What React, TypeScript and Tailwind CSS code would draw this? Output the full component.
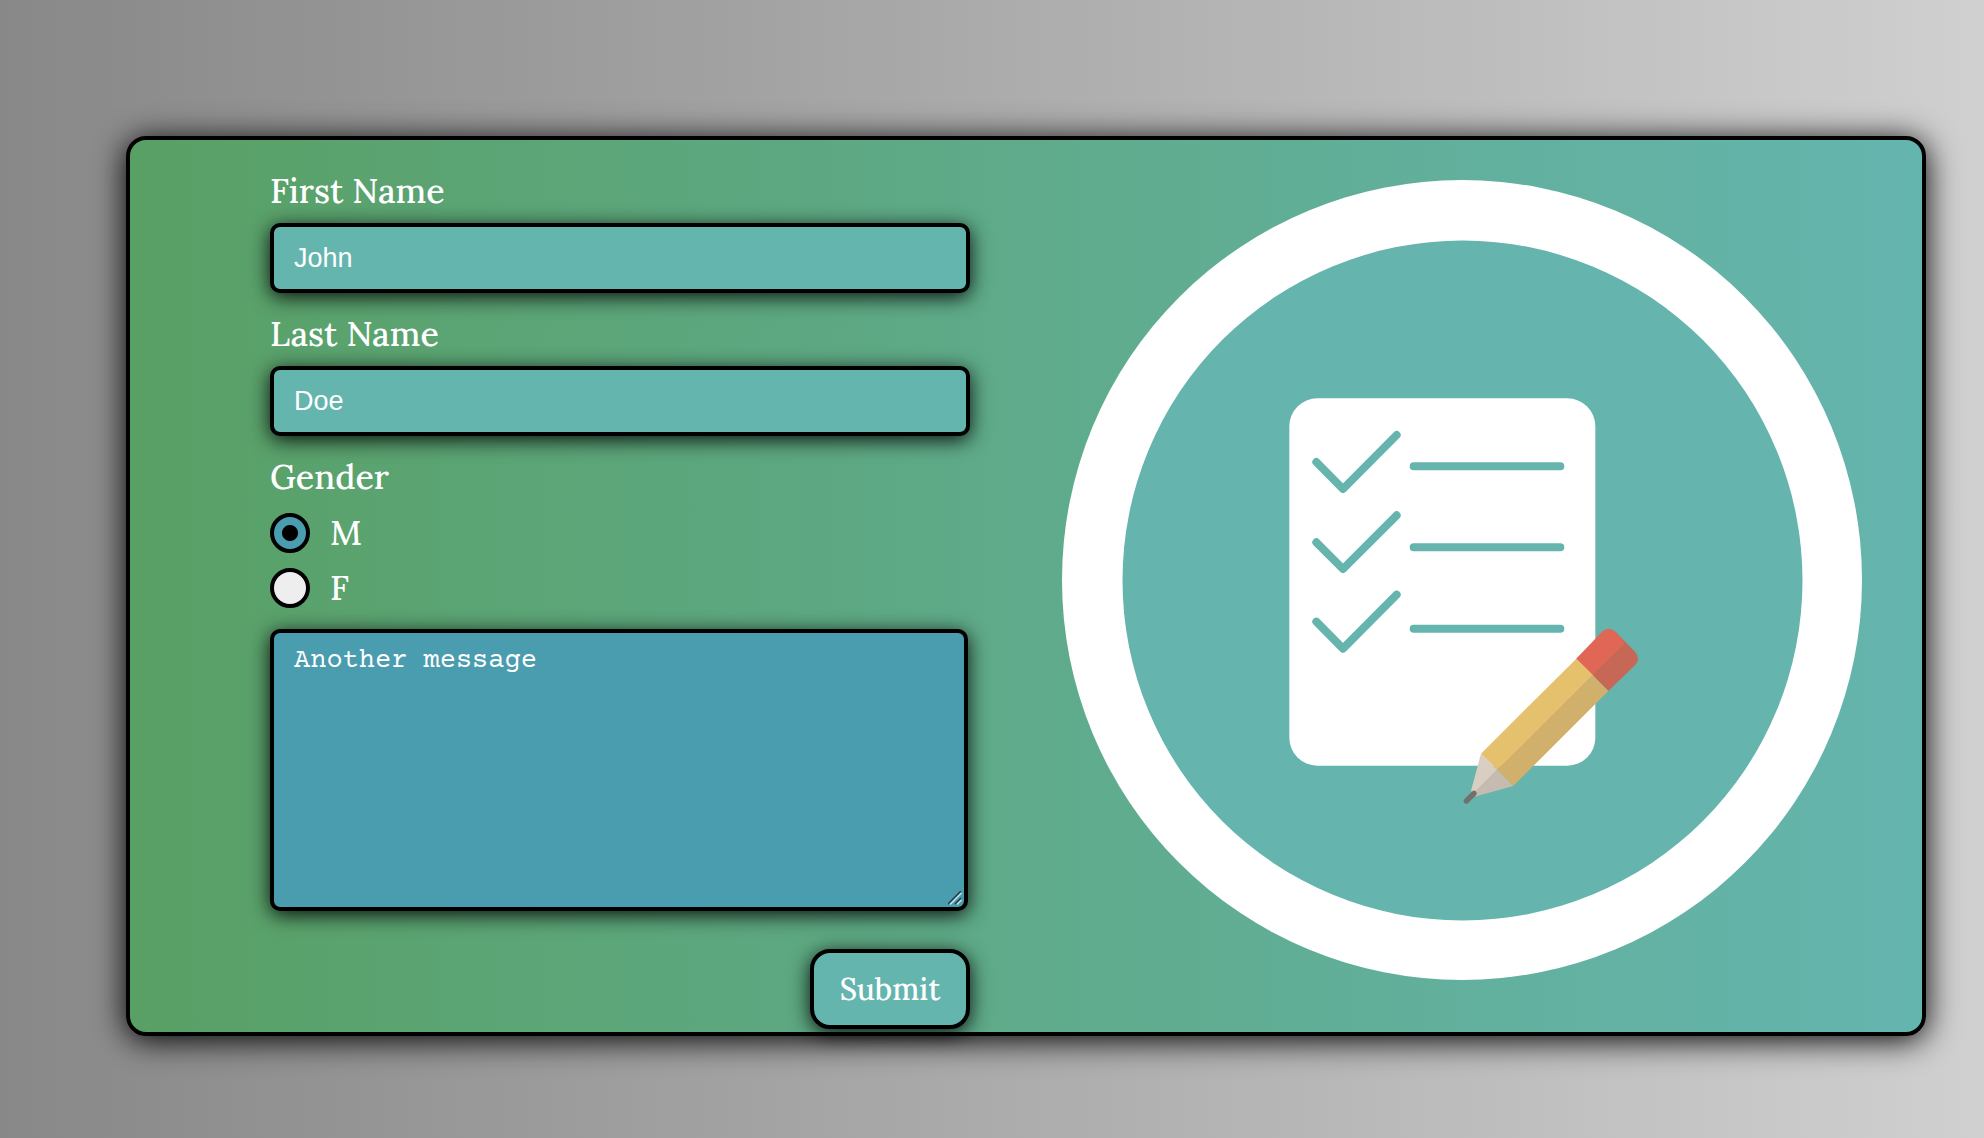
import { useState } from "react";

const serif = "font-['Lora','Liberation_Serif',serif]";

function TextField({ id, label, value }: { id: string; label: string; value: string }) {
  return (
    <div className="mb-[18px]">
      <label htmlFor={id} className="block h-[55px] text-[34px] leading-[46px]">
        {label}
      </label>
      <input
        id={id}
        type="text"
        defaultValue={value}
        className="block h-[70px] w-full rounded-[10px] border-4 border-black bg-[#65b5af] px-5 font-['Liberation_Sans',sans-serif] text-[27px] text-white shadow-[0_4px_20px_rgba(0,0,0,0.9)] outline-none"
      />
    </div>
  );
}

function GenderOption({
  value,
  checked,
  onSelect,
}: {
  value: string;
  checked: boolean;
  onSelect: (value: string) => void;
}) {
  return (
    <label className="flex h-[55px] items-center gap-5 text-[34px] leading-[46px]">
      <input
        type="radio"
        name="gender"
        value={value}
        checked={checked}
        onChange={() => onSelect(value)}
        className="size-10 appearance-none rounded-full border-4 border-black bg-[#eee] checked:bg-[radial-gradient(circle,#000_0_7.5px,#4a9caf_8.5px)]"
      />
      {value}
    </label>
  );
}

function ChecklistArt() {
  return (
    <svg viewBox="0 0 800 800" className="block h-auto w-full" role="img" aria-label="Checklist with pencil">
      <circle cx="400" cy="400" r="400" fill="#fff" />
      <circle cx="400.5" cy="400.5" r="340" fill="#65b4ae" />
      <g transform="translate(188 190) scale(0.33333)">
        <rect x="118" y="85" width="918" height="1102" rx="84" fill="#fff" />
        <g fill="none" stroke="#65b4ae" strokeWidth="24" strokeLinecap="round" strokeLinejoin="round">
          <path d="M199 276 279 357 440 195" />
          <path d="M199 517 279 597 440 436" />
          <path d="M199 755 279 836 440 674" />
          <path d="M491 289H931M491 532H931M491 776H931" />
        </g>
        <path d="M979 866 1056 789Q1076 768 1097 786L1125 822 1028 915Z" fill="#e06655" />
        <path d="M1096 785 1155 845Q1173 866 1155 886L1075 963 1027 915 1123 821Z" fill="#c76857" />
        <path d="M979 866 1056 785Q1076 768 1096 785L1125 819 1028 915Z" fill="#e06655" />
        <path d="M979 866 1028 914 742 1199 693 1151Z" fill="#e6c16d" />
        <path d="M1027 914 1075 963 790 1248 741 1199Z" fill="#d1b06c" />
        <path d="M693 1151 742 1199 672 1270 663 1262Z" fill="#dacdc2" />
        <path d="M742 1199 790 1248 679 1279 666 1273Z" fill="#c6bbb0" />
        <path d="M649 1293 672 1270" stroke="#736f6c" strokeWidth="16" strokeLinecap="round" />
      </g>
    </svg>
  );
}

export default function App() {
  const [gender, setGender] = useState("M");

  return (
    <main className="min-h-screen bg-linear-to-r from-[#888] to-[#d0d0d0] pt-[136px] pr-[58px] pb-[102px] pl-[126px]">
      <section
        className={`flex items-start gap-[92px] rounded-[20px] border-4 border-black bg-linear-to-r from-[#59a065] to-[#65b5af] pr-[60px] pl-[140px] font-medium text-white shadow-[0_4px_32px_#000] ${serif}`}
      >
        <form className="min-w-0 flex-[7] pt-7 pb-[3px]" onSubmit={(event) => event.preventDefault()}>
          <TextField id="first-name" label="First Name" value="John" />
          <TextField id="last-name" label="Last Name" value="Doe" />
          <fieldset>
            <legend className="h-[51px] text-[34px] leading-[46px]">Gender</legend>
            <GenderOption value="M" checked={gender === "M"} onSelect={setGender} />
            <GenderOption value="F" checked={gender === "F"} onSelect={setGender} />
          </fieldset>
          <div className="relative mt-[14px] mr-0.5">
            <textarea
              aria-label="Message"
              defaultValue="Another message"
              className="block h-[282px] w-full resize-none rounded-[10px] border-4 border-black bg-[#4a9caf] px-5 py-2 font-['Courier_Prime','Liberation_Mono',monospace] text-[27px] text-white shadow-[0_4px_20px_rgba(0,0,0,0.9)] outline-none"
            />
            <svg
              viewBox="0 0 14 14"
              className="pointer-events-none absolute right-1.5 bottom-1.5 size-3.5"
              fill="none"
              aria-hidden="true"
            >
              <path d="M0 13 13 0M7 13 13 7" stroke="#1f3f48" strokeWidth="1.5" />
              <path d="M2 13.5 13.5 2M9 13.5 13.5 9" stroke="#c9dfe5" strokeWidth="1.5" />
            </svg>
          </div>
          <button
            type="submit"
            className="mt-[38px] ml-auto block h-20 w-40 rounded-[20px] border-4 border-black bg-[#65b5af] text-[30px] shadow-[0_4px_20px_rgba(0,0,0,0.9)]"
          >
            Submit
          </button>
        </form>
        <div className="min-w-0 flex-[8] pt-10">
          <ChecklistArt />
        </div>
      </section>
    </main>
  );
}
